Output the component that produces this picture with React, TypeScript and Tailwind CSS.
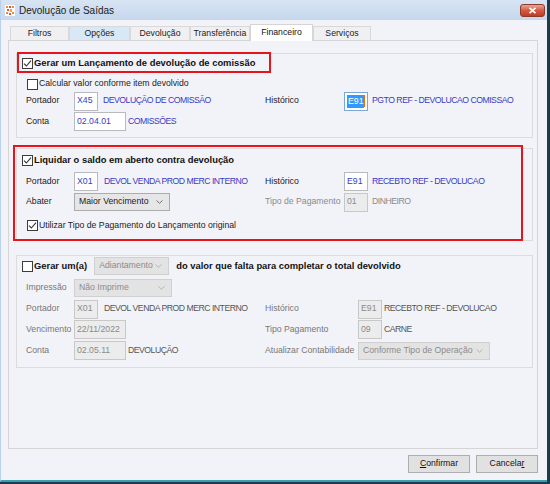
import React from 'react';

type Tone = 'blue' | 'gray' | 'dark';

const toneClass: Record<Tone, string> = {
  blue: 'text-[#3a3ac4]',
  gray: 'text-[#8a8a8a]',
  dark: 'text-[#555]',
};

function Check({ checked }: { checked?: boolean }) {
  return (
    <span className="w-[11px] h-[11px] border border-[#3c3c3c] bg-white flex items-center justify-center shrink-0">
      {checked && (
        <svg width="9" height="9" viewBox="0 0 9 9">
          <path d="M1 4.6 L3.4 7 L8 1.6" fill="none" stroke="#333" strokeWidth="1.1" />
        </svg>
      )}
    </span>
  );
}

function Input({
  value,
  w,
  tone = 'blue',
  disabled,
  selected,
}: {
  value: string;
  w: string;
  tone?: Tone;
  disabled?: boolean;
  selected?: boolean;
}) {
  return (
    <span
      className={`${w} h-[19px] shrink-0 border flex items-center px-[2px] ${
        disabled ? 'bg-[#ececec] border-[#c8c8c8]' : selected ? 'bg-white border-[#7aa7d6]' : 'bg-white border-[#b9b9c0]'
      } ${toneClass[tone]}`}
    >
      {selected ? (
        <>
          <span className="bg-[#3399ff] text-white px-[1px] leading-[13px]">{value}</span>
          <span className="w-[1px] h-[12px] bg-[#e07010]" />
        </>
      ) : (
        value
      )}
    </span>
  );
}

function Select({ value, w, disabled }: { value: string; w: string; disabled?: boolean }) {
  return (
    <span
      className={`${w} h-[18px] shrink-0 border flex items-center justify-between pl-[4px] pr-[6px] ${
        disabled ? 'bg-[#e3e3e3] border-[#d0d0d0] text-[#8c8c8c]' : 'bg-[#e6e6e6] border-[#acacac] text-[#222]'
      }`}
    >
      {value}
      <svg width="7" height="4" viewBox="0 0 7 4">
        <path d="M0.5 0.5 L3.5 3.3 L6.5 0.5" fill="none" stroke={disabled ? '#b0b0b0' : '#666'} strokeWidth="0.9" />
      </svg>
    </span>
  );
}

function Tab({ label, active, hover, w }: { label: string; active?: boolean; hover?: boolean; w: string }) {
  if (active) {
    return (
      <div className={`${w} h-[17px] bg-white border border-b-0 border-[#d5d5d5] flex items-center justify-center text-[#111]`}>
        {label}
      </div>
    );
  }
  return (
    <div
      className={`${w} h-[14px] mb-[1px] border border-b-0 border-[#d9d9d9] flex items-center justify-center text-[#222] ${
        hover ? 'bg-[#d9e8f6]' : 'bg-[#f0f0f3]'
      }`}
    >
      {label}
    </div>
  );
}

const upper = 'tracking-[-0.5px]';

export default function App() {
  return (
    <div className="w-[550px] h-[484px] bg-[#1d3b48] font-['Liberation_Sans',Arial,sans-serif] text-[8.7px] text-[#222]">
      <div className="w-[547px] h-[482px] bg-[#f2f3f8] border-l border-[#b9d1ea] border-b-2 border-b-[#3a9fb0] flex flex-col">
        {/* title bar */}
        <div className="h-[20px] bg-gradient-to-b from-[#d7e4f3] to-[#c6d7ec] flex items-center pl-[4px] pr-[2px]">
          <svg width="10" height="11" viewBox="0 0 10 11" className="shrink-0">
            <rect width="10" height="11" fill="#fff" />
            <rect x="1" y="1" width="2" height="2" fill="#f08a3c" />
            <rect x="4" y="1" width="2" height="2" fill="#e4572c" />
            <rect x="7" y="1" width="2" height="2" fill="#f08a3c" />
            <rect x="2" y="4" width="2" height="2" fill="#e4572c" />
            <rect x="5" y="4" width="2" height="3" fill="#f4a058" />
            <rect x="1" y="7" width="2" height="2" fill="#f08a3c" />
            <rect x="4" y="8" width="2" height="2" fill="#e4572c" />
            <rect x="7" y="7" width="2" height="2" fill="#f08a3c" />
          </svg>
          <span className="ml-[4px] text-[10px] text-[#1b1b1b]">Devolução de Saídas</span>
          <div className="ml-auto w-[25px] h-[13px] rounded-[3px] border border-[#8d3a2c] bg-gradient-to-b from-[#e9a595] via-[#d25a44] to-[#c03a26] flex items-center justify-center">
            <svg width="9" height="7" viewBox="0 0 9 7">
              <path d="M1.5 0.8 L7.5 6.2 M7.5 0.8 L1.5 6.2" stroke="#fff" strokeWidth="1.8" />
            </svg>
          </div>
        </div>

        {/* body */}
        <div className="flex-1 pl-[7px] pt-[4px] flex flex-col">
          <div className="flex items-end h-[17px] pl-[2px] -mb-[1px] relative z-10">
            <Tab label="Filtros" w="w-[59px]" />
            <Tab label="Opções" w="w-[61px]" hover />
            <Tab label="Devolução" w="w-[60px]" />
            <Tab label="Transferência" w="w-[60px]" />
            <Tab label="Financeiro" w="w-[63px]" active />
            <Tab label="Serviços" w="w-[58px]" />
          </div>

          <div className="w-[530px] h-[409px] border border-[#d5d5d5] pt-[12px] pl-[7px] pr-[4px] relative">
            {/* group 1 */}
            <div className="border border-[#dcdcdc] pb-[5px]">
              <div className="h-[19px] flex items-center pl-[5px] gap-[1px]">
                <Check checked />
                <span className="font-bold text-[9.4px] text-[#111]">Gerar um Lançamento de devolução de comissão</span>
              </div>
              <div className="h-[18px] pt-[4px] flex items-center pl-[10px] gap-[1px]">
                <Check />
                <span>Calcular valor conforme item devolvido</span>
              </div>
              <div className="h-[20px] flex items-center pl-[9px]">
                <span className="w-[48px]">Portador</span>
                <div className="w-[191px] flex items-center">
                  <Input value="X45" w="w-[24px]" />
                  <span className={`ml-[5px] text-[#3a3ac4] ${upper}`}>DEVOLUÇÃO DE COMISSÃO</span>
                </div>
                <span className="w-[79px]">Histórico</span>
                <Input value="E91" w="w-[24px]" selected />
                <span className={`ml-[4px] text-[#3a3ac4] ${upper}`}>PGTO REF - DEVOLUCAO COMISSAO</span>
              </div>
              <div className="h-[21px] flex items-center pl-[9px]">
                <span className="w-[48px]">Conta</span>
                <Input value="02.04.01" w="w-[52px]" />
                <span className={`ml-[2px] text-[#3a3ac4] ${upper}`}>COMISSÕES</span>
              </div>
            </div>

            {/* group 2 */}
            <div className="mt-[10px] border border-[#dcdcdc] pb-[1px]">
              <div className="h-[22px] flex items-center pl-[5px] gap-[1px]">
                <Check checked />
                <span className="font-bold text-[9.4px] text-[#111]">Liquidar o saldo em aberto contra devolução</span>
              </div>
              <div className="h-[21px] flex items-center pl-[9px]">
                <span className="w-[48px]">Portador</span>
                <div className="w-[191px] flex items-center">
                  <Input value="X01" w="w-[24px]" />
                  <span className={`ml-[6px] text-[#3a3ac4] ${upper}`}>DEVOL VENDA PROD MERC INTERNO</span>
                </div>
                <span className="w-[79px]">Histórico</span>
                <Input value="E91" w="w-[24px]" />
                <span className={`ml-[4px] text-[#3a3ac4] ${upper}`}>RECEBTO REF - DEVOLUCAO</span>
              </div>
              <div className="h-[20px] flex items-center pl-[9px]">
                <span className="w-[48px]">Abater</span>
                <div className="w-[191px] flex items-center">
                  <Select value="Maior Vencimento" w="w-[96px]" />
                </div>
                <span className="w-[79px] text-[#8a8a8a]">Tipo de Pagamento</span>
                <Input value="01" w="w-[24px]" tone="gray" disabled />
                <span className={`ml-[4px] text-[#8a8a8a] ${upper}`}>DINHEIRO</span>
              </div>
              <div className="h-[27px] flex items-center pl-[10px] gap-[1px]">
                <Check checked />
                <span>Utilizar Tipo de Pagamento do Lançamento original</span>
              </div>
            </div>

            {/* group 3 */}
            <div className="mt-[14px] border border-[#dcdcdc] pb-[6px] text-[#777]">
              <div className="h-[20px] flex items-center pl-[5px]">
                <Check />
                <span className="ml-[1px] font-bold text-[9.4px] text-[#111]">Gerar um(a)</span>
                <span className="ml-[7px]">
                  <Select value="Adiantamento" w="w-[75px]" disabled />
                </span>
                <span className="ml-[7px] font-bold text-[9.4px] text-[#111]">
                  do valor que falta para completar o total devolvido
                </span>
              </div>
              <div className="h-[23px] flex items-center pl-[9px]">
                <span className="w-[48px]">Impressão</span>
                <Select value="Não Imprime" w="w-[98px]" disabled />
              </div>
              <div className="h-[20px] flex items-center pl-[9px]">
                <span className="w-[48px]">Portador</span>
                <div className="w-[191px] flex items-center">
                  <Input value="X01" w="w-[24px]" tone="gray" disabled />
                  <span className={`ml-[6px] text-[#555] ${upper}`}>DEVOL VENDA PROD MERC INTERNO</span>
                </div>
                <span className="w-[93px]">Histórico</span>
                <Input value="E91" w="w-[24px]" tone="gray" disabled />
                <span className={`ml-[2px] text-[#555] ${upper}`}>RECEBTO REF - DEVOLUCAO</span>
              </div>
              <div className="h-[21px] flex items-center pl-[9px]">
                <span className="w-[48px]">Vencimento</span>
                <div className="w-[191px] flex items-center">
                  <Input value="22/11/2022" w="w-[52px]" tone="gray" disabled />
                </div>
                <span className="w-[93px]">Tipo Pagamento</span>
                <Input value="09" w="w-[24px]" tone="gray" disabled />
                <span className={`ml-[2px] text-[#555] ${upper}`}>CARNE</span>
              </div>
              <div className="h-[21px] flex items-center pl-[9px]">
                <span className="w-[48px]">Conta</span>
                <div className="w-[191px] flex items-center">
                  <Input value="02.05.11" w="w-[52px]" tone="gray" disabled />
                  <span className={`ml-[2px] text-[#555] ${upper}`}>DEVOLUÇÃO</span>
                </div>
                <span className="w-[93px]">Atualizar Contabilidade</span>
                <Select value="Conforme Tipo de Operação" w="w-[132px]" disabled />
              </div>
            </div>

            {/* annotation highlights */}
            <div className="absolute left-[8px] top-[11px] w-[254px] h-[21px] border-2 border-[#e8141c] pointer-events-none" />
            <div className="absolute left-[4px] top-[104px] w-[510px] h-[96px] border-2 border-[#e8141c] pointer-events-none" />
          </div>

          <div className="w-[530px] mt-[6px] flex justify-end gap-[6px]">
            <button className="w-[62px] h-[18px] bg-[#e1e1e1] border border-[#adadad] text-[#111]">
              <span className="underline">C</span>onfirmar
            </button>
            <button className="w-[62px] h-[18px] bg-[#e1e1e1] border border-[#adadad] text-[#111]">
              Cancela<span className="underline">r</span>
            </button>
          </div>
        </div>
      </div>
    </div>
  );
}
